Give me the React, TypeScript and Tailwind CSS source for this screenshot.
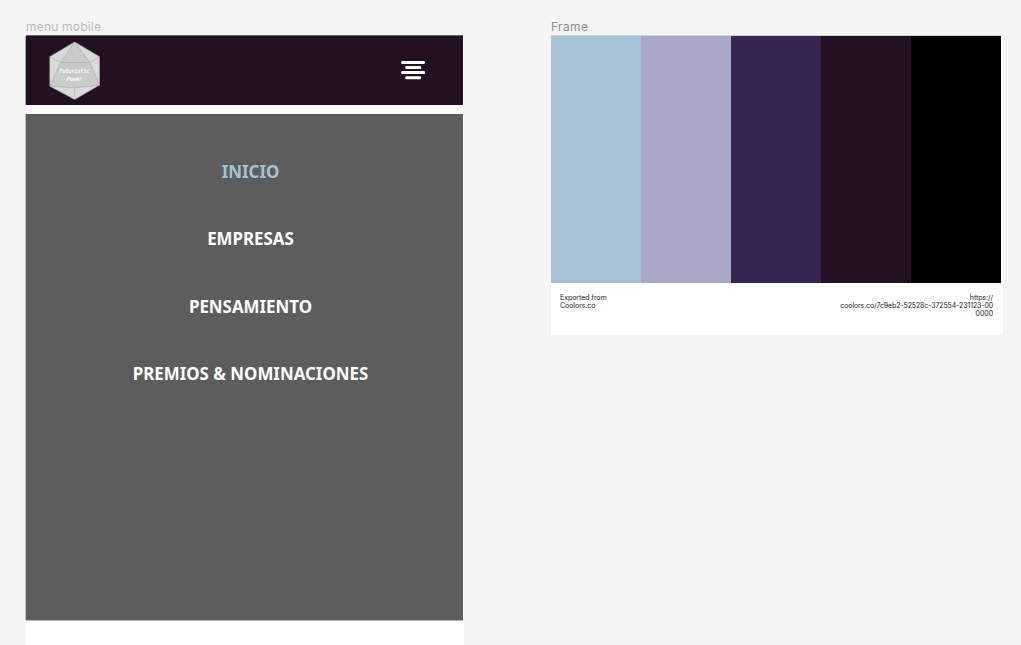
type MenuItem = { label: string; active?: boolean };

const menuItems: MenuItem[] = [
  { label: "INICIO", active: true },
  { label: "EMPRESAS" },
  { label: "PENSAMIENTO" },
  { label: "PREMIOS & NOMINACIONES" },
];

const swatches = ["bg-[#a5c3d6]", "bg-[#a9a7c7]", "bg-[#372554]", "bg-[#231123]", "bg-black"];

function Logo() {
  return (
    <svg width="52" height="60" viewBox="0 0 52 60" role="img" aria-label="Futuristic Power">
      <path d="M25.7 1 50.5 15.7V44L25.7 58.5.8 45.2V15.7z" fill="#dadada" />
      <path d="M25.7 1 11.5 21.7.8 45.2l24.9 1.6 24.8-2.6-9.5-22.7z" fill="#cbcbcb" />
      <path d="M11.5 21.7 41 21.5 25.7 46.8z" fill="#c9c9c9" />
      <path
        d="M25.7 1 50.5 15.7V44L25.7 58.5.8 45.2V15.7zM25.7 1 11.5 21.7 41 21.5zM.8 15.7l10.7 6L.8 45.2l24.9 1.6L50.5 44.2 41 21.5l9.5-5.8M25.7 46.8v11.7"
        fill="none"
        stroke="#aaaaaa"
        strokeWidth=".6"
      />
      <g fill="#ffffff" stroke="#ffffff" strokeWidth=".15" fontFamily="'DejaVu Sans Mono', monospace" fontStyle="italic" fontSize="5.9" textAnchor="middle">
        <text x="25.6" y="32.4" textLength="30" lengthAdjust="spacingAndGlyphs">Futuristic</text>
        <text x="25.4" y="39.5" textLength="15.5" lengthAdjust="spacingAndGlyphs">Power</text>
      </g>
    </svg>
  );
}

function MenuIcon() {
  return (
    <svg className="mb-px" width="24" height="20" viewBox="0 0 24 20" fill="#ffffff" aria-hidden="true">
      <rect x="0.2" y="0.9" width="23.8" height="3" rx="1.2" />
      <rect x="4.2" y="6" width="16" height="3" rx="1.2" />
      <rect x="0.2" y="11.1" width="23.8" height="3" rx="1.2" />
      <rect x="4.2" y="16.2" width="16" height="3" rx="1.2" />
    </svg>
  );
}

function MobileMenu() {
  return (
    <section className="flex w-[438px] flex-col">
      <h2 className="h-[18px] text-[12px] leading-[18px] tracking-[0.2px] text-[#b9b9b9]">menu mobile</h2>
      <div className="flex h-[609px] flex-col bg-white">
        <header className="flex h-[69px] w-[437px] items-center justify-between bg-[#231123] pr-[38px] pl-[23px] shadow-[0_-1px_0_#6b626b,-1px_0_0_#aaa5aa]">
          <Logo />
          <MenuIcon />
        </header>
        <nav className="mt-[9px] flex h-[506px] w-[437px] flex-col items-center bg-[#5d5d5d] pt-[23.6px] pl-[12px] font-['Noto_Sans'] text-[16.9px] font-bold shadow-[-1px_0_0_#bababa,0_1px_0_#bababa]">
          {menuItems.map((item) => (
            <a key={item.label} className={`flex h-[67.6px] items-center whitespace-nowrap ${item.active ? "text-[#a5c3d6]" : "text-white"}`}>
              {item.label}
            </a>
          ))}
        </nav>
      </div>
    </section>
  );
}

function Palette() {
  return (
    <section className="flex w-[452px] flex-col">
      <h2 className="h-[18px] text-[12px] leading-[18px] tracking-[0.35px] text-[#8d8d8d]">Frame</h2>
      <div className="h-[299px] bg-white">
        <div className="grid h-[247px] w-[450px] grid-cols-5 shadow-[0_-1px_0_#d0d0d6]">
          {swatches.map((color) => (
            <div key={color} className={color} />
          ))}
        </div>
        <div className="flex justify-between pt-[11px] pr-[10px] pl-[9px] text-[7px] leading-[8px] tracking-[-0.05px] text-[#222222]">
          <p>
            Exported from
            <br />
            Coolors.co
          </p>
          <p className="text-right">
            https://
            <br />
            <span className="tracking-[-0.11px]">coolors.co/7c9eb2-52528c-372554-231123-00</span>
            <br />
            0000
          </p>
        </div>
      </div>
    </section>
  );
}

export default function App() {
  return (
    <main className="flex h-[645px] w-[1021px] gap-[87px] overflow-hidden bg-[#f5f5f5] pt-[18px] pl-[26px] font-[Inter,sans-serif]">
      <MobileMenu />
      <Palette />
    </main>
  );
}
